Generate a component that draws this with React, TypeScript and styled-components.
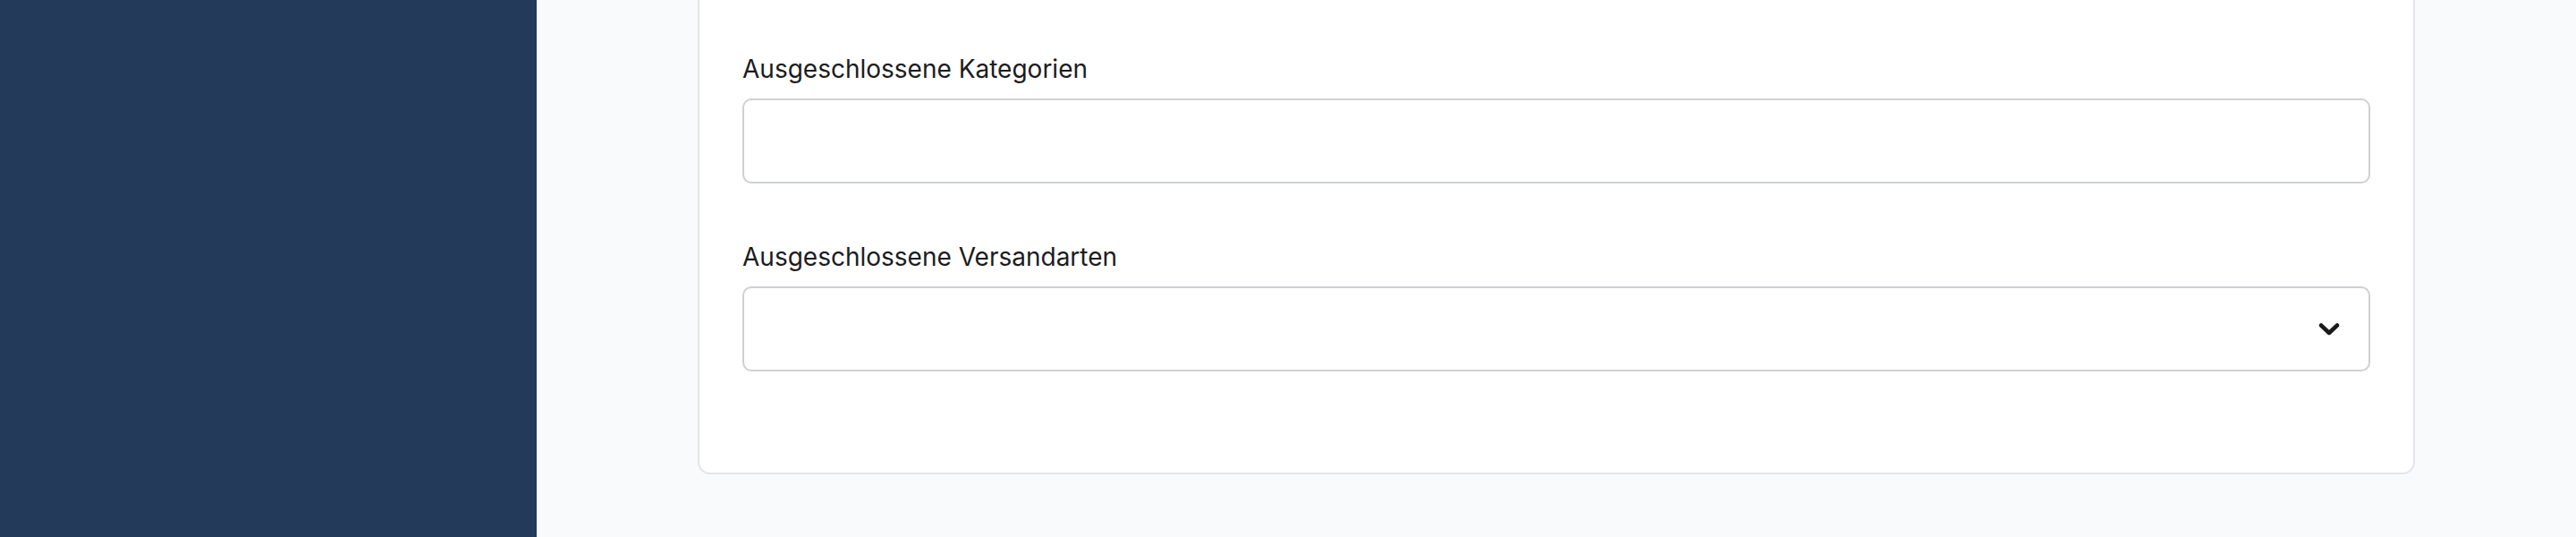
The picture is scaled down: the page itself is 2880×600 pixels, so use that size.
import styled, { createGlobalStyle } from 'styled-components'

const GlobalStyle = createGlobalStyle`
  html, body {
    margin: 0;
    padding: 0;
    background: #f9fafc;
  }

  body {
    font-family: Inter, "Noto Sans", "Liberation Sans", sans-serif;
    color: #1c1c1e;
  }
`

const Layout = styled.div`
  display: flex;
  width: 100%;
  min-height: 600px;
`

const Sidebar = styled.aside`
  flex: 0 0 600px;
  background: #243a5a;
`

const Main = styled.main`
  flex: 1;
  display: flex;
  justify-content: center;
  background: #f9fafc;
`

// the top of the card is scrolled out of view
const Card = styled.section`
  box-sizing: border-box;
  width: 1920px;
  align-self: flex-start;
  background: #ffffff;
  border: 2px solid #e3e5e9;
  border-top: none;
  border-radius: 0 0 14px 14px;
  padding: 59px 48px 113px;
  display: flex;
  flex-direction: column;
  gap: 64px;
`

const Field = styled.div`
  display: flex;
  flex-direction: column;
`

const Label = styled.label`
  display: block;
  font-size: 28px;
  line-height: 36px;
  margin-bottom: 15px;
  color: #1c1c1e;
`

const Input = styled.div`
  box-sizing: border-box;
  height: 95px;
  border: 2px solid #cfd0d2;
  border-radius: 10px;
  background: #ffffff;
  display: flex;
  align-items: center;
  justify-content: flex-end;
  padding-right: 32px;
`

const Chevron = () => (
  <svg width="24" height="16" viewBox="0 0 24 16" fill="none">
    <path d="M3 3.5 L12 12 L21 3.5" stroke="#1a1a1a" strokeWidth="4.5" strokeLinecap="round" strokeLinejoin="round" />
  </svg>
)

export default function App() {
  return (
    <>
      <GlobalStyle />
      <Layout>
        <Sidebar />
        <Main>
          <Card>
            <Field>
              <Label>Ausgeschlossene Kategorien</Label>
              <Input />
            </Field>
            <Field>
              <Label>Ausgeschlossene Versandarten</Label>
              <Input>
                <Chevron />
              </Input>
            </Field>
          </Card>
        </Main>
      </Layout>
    </>
  )
}
